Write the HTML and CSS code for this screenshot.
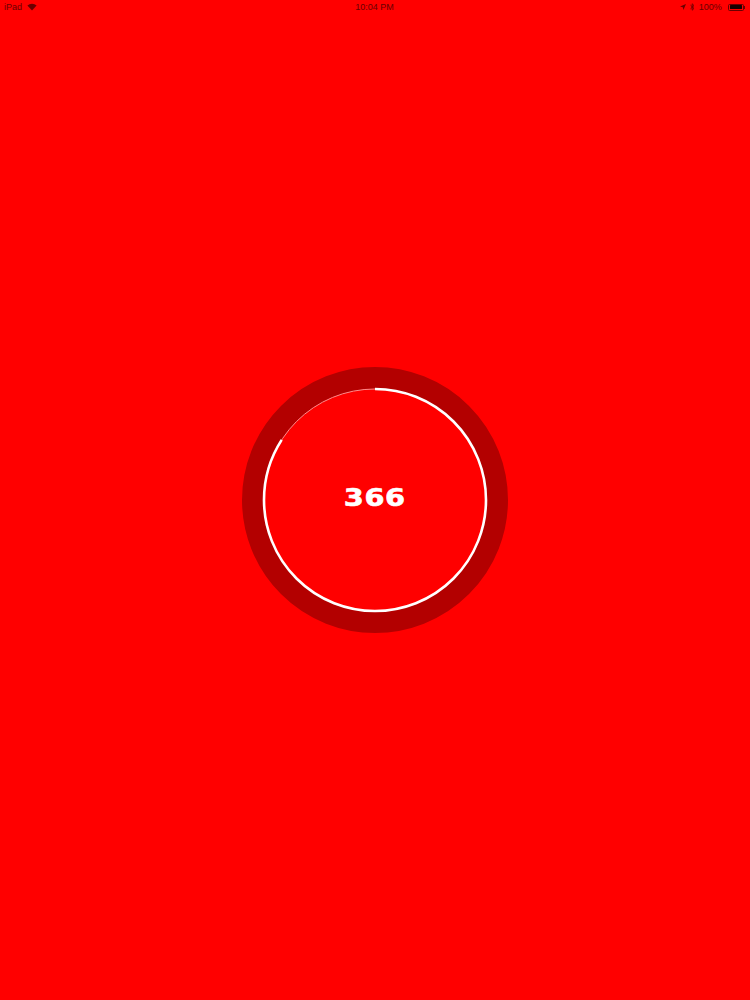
FILE: index.html
```html
<!DOCTYPE html>
<html>
<head>
<meta charset="utf-8">
<link rel="stylesheet" href="styles.css">
</head>
<body>
<div class="page">
  <div class="statusbar">
    <div class="sb-left">
      <span class="sb-text">iPad</span>
      <svg class="wifi" width="10" height="8" viewBox="0 0 10 8">
        <path d="M5 7.6 L0.4 2.6 A6.6 6.6 0 0 1 9.6 2.6 Z" fill="#6a0000"/>
      </svg>
    </div>
    <div class="sb-center"><span class="sb-text">10:04 PM</span></div>
    <div class="sb-right">
      <svg class="loc" width="6" height="6" viewBox="0 0 6 6">
        <path d="M6 0 L0 2.6 L2.8 3.2 L3.4 6 Z" fill="#6a0000"/>
      </svg>
      <svg class="bt" width="5" height="8" viewBox="0 0 5 8">
        <path d="M0.5 2.2 L4 5.4 L2.2 7.2 L2.2 0.8 L4 2.6 L0.5 5.8" fill="none" stroke="#6a0000" stroke-width="0.9"/>
      </svg>
      <span class="sb-text">100%</span>
      <div class="battery"><div class="battery-fill"></div></div>
      <div class="battery-nub"></div>
    </div>
  </div>
  <main class="main">
    <div class="timer">
      <svg class="ring" width="270" height="270" viewBox="0 0 270 270">
        <circle cx="135" cy="135" r="122" fill="none" stroke="#b30000" stroke-width="22"/>
        <circle cx="135" cy="135" r="111" fill="none" stroke="#ff8c8c" stroke-width="1"/>
        <circle cx="135" cy="135" r="111" fill="none" stroke="#ffffff" stroke-width="2.6"
                stroke-dasharray="586 800" transform="rotate(-90 135 135)"/>
      </svg>
      <div class="count">366</div>
    </div>
  </main>
</div>
</body>
</html>
```

FILE: styles.css
```css
html, body {
  margin: 0;
  padding: 0;
  background: #ff0000;
}
.page {
  width: 750px;
  height: 1000px;
  display: flex;
  flex-direction: column;
  background: #ff0000;
  font-family: "Liberation Sans", Arial, sans-serif;
}
.statusbar {
  height: 14px;
  display: grid;
  grid-template-columns: 1fr auto 1fr;
  align-items: center;
  padding: 0 5px 0 4px;
  font-size: 9px;
  line-height: 14px;
}
.sb-text {
  font-size: 9px;
  color: #6a0000;
  line-height: 14px;
}
.sb-left {
  display: flex;
  align-items: center;
  gap: 5px;
  height: 14px;
}
.sb-center {
  display: flex;
  align-items: center;
  justify-content: center;
  height: 14px;
}
.sb-right {
  display: flex;
  align-items: center;
  justify-content: flex-end;
  gap: 4px;
  height: 14px;
}
.battery {
  width: 16px;
  height: 7px;
  border: 1px solid #6a0000;
  border-radius: 1.5px;
  padding: 0.8px;
  box-sizing: border-box;
  margin-left: 2px;
}
.battery-fill {
  width: 100%;
  height: 100%;
  background: #1a0000;
  border-radius: 0.5px;
}
.battery-nub {
  width: 1.2px;
  height: 3px;
  background: #6a0000;
  margin-left: -4px;
}
.main {
  flex: 1;
  display: flex;
  align-items: center;
  justify-content: center;
  padding-bottom: 14px;
}
.timer {
  width: 270px;
  height: 270px;
  display: grid;
  place-items: center;
}
.ring, .count {
  grid-area: 1 / 1;
}
.count {
  font-family: "DejaVu Sans", "Liberation Sans", sans-serif;
  font-weight: 700;
  font-size: 24px;
  letter-spacing: 0.5px;
  color: #ffffff;
  line-height: 1;
  margin-top: -5px;
  transform: scaleX(1.2);
  -webkit-text-stroke: 0.6px #ffffff;
}
```
